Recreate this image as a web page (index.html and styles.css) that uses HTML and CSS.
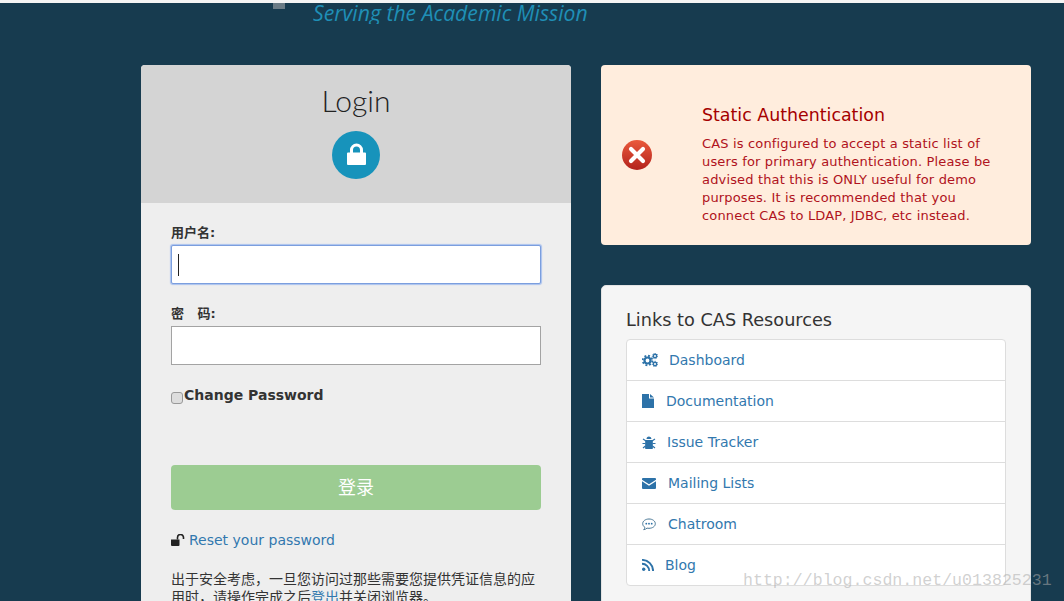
FILE: index.html
```html
<!DOCTYPE html>
<html lang="en">
  <head>
    <meta charset="UTF-8" />
    <title>CAS Login</title>
    <link rel="stylesheet" href="styles.css">
  </head>
  <body>
    <div class="top-strip"></div>
    <header class="site-header">
      <div class="logo-stub"></div>
      <div class="tagline">Serving the Academic Mission</div>
    </header>
    <main class="columns">
      <section class="login-box">
        <div class="login-head">
          <h1>Login</h1>
          <div class="lock-circle">
            <svg class="lock-icon" width="19" height="22" viewBox="0 0 19 22"><path d="M3 9.500V7a6.500 6.500 0 0 1 13 0v2.500h2a1 1 0 0 1 1 1V21a1 1 0 0 1-1 1H1a1 1 0 0 1-1-1V10.500a1 1 0 0 1 1-1zM6 9.500h7V7a3.500 3.500 0 0 0-7 0z" fill="#fff"/></svg>
          </div>
        </div>
        <form class="login-form">
          <label class="field-label">用户名:</label>
          <div class="fake-input focused"><span class="caret"></span></div>
          <label class="field-label second">密&nbsp;&nbsp;&nbsp;码:</label>
          <div class="fake-input"></div>
          <div class="change-row">
            <span class="checkbox"></span><span class="change-text">Change Password</span>
          </div>
          <div class="submit-btn">登录</div>
          <div class="reset-row">
            <svg width="14" height="12" viewBox="0 0 14 12"><path d="M0 5.500h8.500V11a1 1 0 0 1-1 1H1a1 1 0 0 1-1-1z" fill="#222"/><path d="M6.500 5.500V3.500a3 3 0 0 1 6 0V5" fill="none" stroke="#222" stroke-width="1.600"/></svg>
            <a class="link">Reset your password</a>
          </div>
          <p class="notice">出于安全考虑，一旦您访问过那些需要您提供凭证信息的应用时，请操作完成之后<a class="link">登出</a>并关闭浏览器。</p>
        </form>
      </section>
      <div class="right-col">
        <section class="alert-box">
          <div class="alert-icon">
            <svg width="32" height="32" viewBox="0 0 32 32">
              <defs>
                <linearGradient id="redball" x1="0" y1="0" x2="0" y2="1">
                  <stop offset="0" stop-color="#ea5a3c"/>
                  <stop offset="1" stop-color="#b3221c"/>
                </linearGradient>
              </defs>
              <circle cx="16" cy="16" r="15" fill="url(#redball)"/>
              <path d="M10 10l12 12M22 10L10 22" stroke="#fff" stroke-width="4.200" stroke-linecap="round"/>
            </svg>
          </div>
          <div class="alert-text">
            <h2>Static Authentication</h2>
            <p>CAS is configured to accept a static list of users for primary authentication. Please be advised that this is ONLY useful for demo purposes. It is recommended that you connect CAS to LDAP, JDBC, etc instead.</p>
          </div>
        </section>
        <section class="links-box">
          <h3>Links to CAS Resources</h3>
          <ul class="link-list">
            <li>
              <svg class="icon" width="16" height="14" viewBox="0 0 16 14"><circle cx="5.500" cy="7.500" r="3" fill="none" stroke="#2d72a8" stroke-width="2.200"/><circle cx="5.500" cy="7.500" r="4.800" fill="none" stroke="#2d72a8" stroke-width="1.800" stroke-dasharray="1.900 1.870"/><circle cx="13" cy="3" r="1.700" fill="none" stroke="#2d72a8" stroke-width="1.400"/><circle cx="13" cy="3" r="2.700" fill="none" stroke="#2d72a8" stroke-width=".9" stroke-dasharray="1.200 1.200"/><circle cx="13" cy="11" r="1.700" fill="none" stroke="#2d72a8" stroke-width="1.400"/><circle cx="13" cy="11" r="2.700" fill="none" stroke="#2d72a8" stroke-width=".9" stroke-dasharray="1.200 1.200"/></svg>
              <a class="link gap-dash">Dashboard</a>
            </li>
            <li>
              <svg class="icon" width="12" height="14" viewBox="0 0 12 14"><path d="M0 0h7v4.500h5V14H0zM8 0l4 3.500H8z" fill="#2d72a8"/></svg>
              <a class="link gap-doc">Documentation</a>
            </li>
            <li>
              <svg class="icon" width="14" height="13" viewBox="0 0 14 13"><path d="M4.500 3a2.500 2.500 0 0 1 5 0zM4 4h6a1 1 0 0 1 .8.800L10.900 12a4 4 0 0 1-7.800 0l.1-7.200A1 1 0 0 1 4 4z" fill="#2d72a8"/><path d="M1 3l3 2M13 3l-3 2M.5 7.500h3M13.500 7.500h-3M1 12l2.500-2M13 12l-2.500-2" stroke="#2d72a8" stroke-width="1.200"/></svg>
              <a class="link gap-bug">Issue Tracker</a>
            </li>
            <li>
              <svg class="icon" width="14" height="11" viewBox="0 0 14 11"><path d="M0 1a1 1 0 0 1 1-1h12a1 1 0 0 1 1 1v.7L7 6.300 0 1.700zM0 3.200l7 4.600 7-4.600V10a1 1 0 0 1-1 1H1a1 1 0 0 1-1-1z" fill="#2d72a8"/></svg>
              <a class="link gap-mail">Mailing Lists</a>
            </li>
            <li>
              <svg class="icon" width="14" height="13" viewBox="0 0 14 13"><path d="M7 1c3.500 0 6.300 2 6.300 4.700S10.500 10.300 7 10.300c-.8 0-1.400-.1-2-.2-.8.800-2 1.400-3.300 1.600.7-.8 1.100-1.600 1.200-2.400C1.500 8.500.7 7.200.7 5.700.7 3 3.500 1 7 1z" fill="none" stroke="#4a7896" stroke-width="1"/><circle cx="4.300" cy="5.700" r=".9" fill="#2d72a8"/><circle cx="7" cy="5.700" r=".9" fill="#2d72a8"/><circle cx="9.700" cy="5.700" r=".9" fill="#2d72a8"/></svg>
              <a class="link gap-mail">Chatroom</a>
            </li>
            <li>
              <svg class="icon" width="12" height="12" viewBox="0 0 12 12"><circle cx="1.700" cy="10.300" r="1.700" fill="#2d72a8"/><path d="M0 4.800a7.200 7.200 0 0 1 7.200 7.200M0 .9A11.100 11.100 0 0 1 11.100 12" fill="none" stroke="#2d72a8" stroke-width="1.900"/></svg>
              <a class="link gap-rss">Blog</a>
            </li>
          </ul>
        </section>
      </div>
    </main>
    <div class="watermark">http://blog.csdn.net/u013825231</div>
  </body>
</html>
```

FILE: styles.css
```css
html,
body {
  height: 601px;
  overflow: hidden;
}

body {
  margin: 0;
  position: relative;
  background-color: #173b4f;
  font-family: "DejaVu Sans", "Noto Sans CJK SC", sans-serif;
  color: #333;
}

.top-strip {
  height: 3px;
  background-color: #f4f4f4;
}

.site-header {
  height: 62px;
  overflow: hidden;
  display: flex;
  align-items: flex-start;
}

.logo-stub {
  width: 12px;
  height: 6px;
  margin-left: 273px;
  background-color: #6b7c86;
}

.tagline {
  margin-left: 28px;
  margin-top: -4px;
  height: 25px;
  overflow: hidden;
  font-family: "Open Sans", sans-serif;
  font-style: italic;
  font-size: 21.200px;
  line-height: 27px;
  color: #1f8fb6;
  white-space: nowrap;
}

.columns {
  display: flex;
  gap: 30px;
  padding-left: 141px;
}

.login-box {
  width: 430px;
  height: 600px;
  background-color: #eee;
  border-radius: 4px 4px 0 0;
  overflow: hidden;
}

.login-head {
  height: 138px;
  background-color: #d4d4d4;
  display: flex;
  flex-direction: column;
  align-items: center;
}

.login-head h1 {
  margin: 17px 0 0;
  font-family: Lato, sans-serif;
  font-weight: 300;
  font-size: 30px;
  line-height: 36px;
  color: #222;
}

.lock-circle {
  width: 48px;
  height: 48px;
  margin-top: 13px;
  border-radius: 50%;
  background-color: #1793bb;
  display: flex;
  align-items: center;
  justify-content: center;
}

.lock-icon {
  margin-bottom: 2px;
}

.login-form {
  padding: 20px 30px 0;
}

.field-label {
  display: block;
  height: 22px;
  font-size: 13px;
  font-weight: bold;
  line-height: 20px;
}

.field-label.second {
  margin-top: 20px;
}

.fake-input {
  box-sizing: border-box;
  height: 39px;
  background-color: #fff;
  border: 1px solid #a3a3a3;
  display: flex;
  align-items: center;
  padding-left: 6px;
}

.fake-input.focused {
  border: 1px solid #7b9ede;
  border-radius: 2px;
  box-shadow: 0 0 1px 1px #a9c1ee;
}

.caret {
  width: 1px;
  height: 22px;
  background-color: #222;
}

.change-row {
  display: flex;
  align-items: flex-start;
  margin-top: 20px;
  height: 80px;
}

.checkbox {
  box-sizing: border-box;
  width: 12px;
  height: 12px;
  margin-top: 7px;
  background-color: #ddd;
  border: 1px solid #999;
  border-radius: 3px;
}

.change-text {
  margin-left: 1px;
  font-size: 14px;
  font-weight: bold;
  line-height: 20px;
}

.submit-btn {
  height: 45px;
  border-radius: 4px;
  background-color: #9ccc92;
  color: #fff;
  font-size: 18px;
  line-height: 45px;
  text-align: center;
}

.reset-row {
  display: flex;
  align-items: center;
  gap: 4px;
  margin-top: 20px;
  font-size: 14px;
  line-height: 20px;
}

.link {
  color: #3278ae;
}

.notice {
  margin: 20px 0 0;
  font-size: 14px;
  line-height: 18px;
}

.right-col {
  width: 430px;
  display: flex;
  flex-direction: column;
  gap: 40px;
}

.alert-box {
  box-sizing: border-box;
  height: 180px;
  background-color: #ffeddd;
  border-radius: 4px;
  display: flex;
  align-items: center;
  padding-left: 20px;
  color: #b01220;
}

.alert-icon {
  width: 32px;
  height: 32px;
  margin-right: 49px;
  flex-shrink: 0;
}

.alert-text {
  padding-top: 19px;
}

.alert-text h2 {
  margin: 0 0 10px;
  font-size: 17.400px;
  font-weight: normal;
  line-height: 20px;
  color: #a50000;
}

.alert-text p {
  margin: 0;
  width: 300px;
  font-size: 13px;
  letter-spacing: 0.160px;
  line-height: 18px;
}

.links-box {
  box-sizing: border-box;
  height: 340px;
  padding: 24px 24px 0 24px;
  background-color: #f5f5f5;
  border: 1px solid #e3e3e3;
  border-radius: 5px;
}

.links-box h3 {
  margin: 0 0 9px;
  font-size: 17.700px;
  font-weight: normal;
  line-height: 20px;
  color: #333;
}

.link-list {
  margin: 0;
  padding: 0;
  list-style: none;
  background-color: #fff;
  border: 1px solid #ddd;
  border-radius: 4px;
}

.link-list li {
  height: 40px;
  display: flex;
  align-items: center;
  padding-left: 15px;
  font-size: 14px;
}

.link-list li + li {
  border-top: 1px solid #ddd;
}

.icon {
  flex-shrink: 0;
}

.gap-dash { margin-left: 11px; }
.gap-doc { margin-left: 12px; }
.gap-bug { margin-left: 11px; }
.gap-mail { margin-left: 12px; }
.gap-rss { margin-left: 11px; }

.watermark {
  position: absolute;
  left: 743px;
  top: 569px;
  font-family: "Liberation Mono", monospace;
  font-size: 16.600px;
  line-height: 24px;
  color: rgba(170, 170, 170, 0.55);
  white-space: nowrap;
}
```
